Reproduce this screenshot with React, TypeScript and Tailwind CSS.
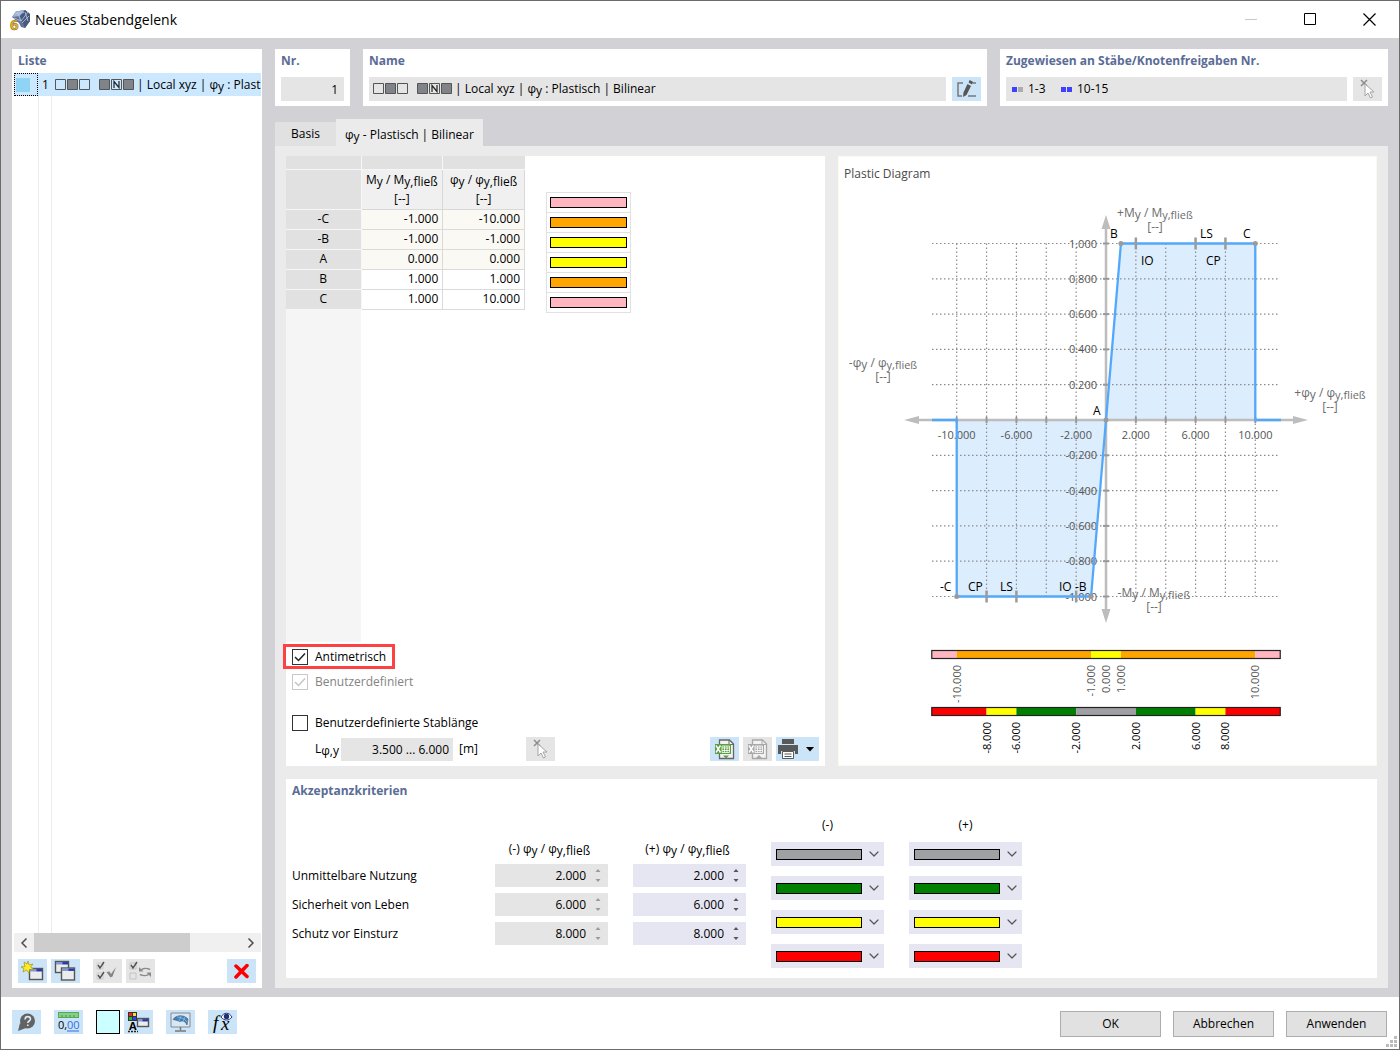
import { useState, type ReactNode } from "react";
import { ChevronDown, ChevronLeft, ChevronRight } from "lucide-react";

type PointRow = { name: string; moment: string; rotation: string; locked: boolean };

const points: PointRow[] = [
  { name: "-C", moment: "-1.000", rotation: "-10.000", locked: true },
  { name: "-B", moment: "-1.000", rotation: "-1.000", locked: true },
  { name: "A", moment: "0.000", rotation: "0.000", locked: true },
  { name: "B", moment: "1.000", rotation: "1.000", locked: false },
  { name: "C", moment: "1.000", rotation: "10.000", locked: false },
];

const zoneColors = ["bg-[#ffb6c1]", "bg-[#ffa500]", "bg-[#ffff00]", "bg-[#ffff00]", "bg-[#ffa500]", "bg-[#ffb6c1]"];

const criteria = [
  { id: "io", label: "Unmittelbare Nutzung", value: "2.000" },
  { id: "ls", label: "Sicherheit von Leben", value: "6.000" },
  { id: "cp", label: "Schutz vor Einsturz", value: "8.000" },
];

const criteriaColors = [
  { value: "#a0a0a4", swatch: "bg-[#a0a0a4]" },
  { value: "#008000", swatch: "bg-[#008000]" },
  { value: "#ffff00", swatch: "bg-[#ffff00]" },
  { value: "#ff0000", swatch: "bg-[#ff0000]" },
];

export default function App() {
  return (
    <div className="flex min-h-screen flex-col border border-[#6b6b6b] bg-white font-['Open_Sans','Noto_Sans',sans-serif] text-xs text-black">
      <TitleBar />
      <main className="flex flex-1 gap-[13px] bg-[#d1d1d6] px-[11px] pt-[11px] pb-[9px]">
        <ListPanel />
        <div className="flex min-w-0 flex-1 flex-col">
          <HeaderFields />
          <Tabs />
          <div className="flex flex-1 flex-col gap-[13px] bg-[#ebebeb] px-[11px] py-[10px]">
            <div className="grid flex-1 grid-cols-2 gap-[13px]">
              <PointsPanel />
              <DiagramPanel />
            </div>
            <CriteriaPanel />
          </div>
        </div>
      </main>
      <Footer />
    </div>
  );
}

function TitleBar() {
  return (
    <header className="flex h-[37px] items-center pl-2">
      <AppIcon />
      <h1 className="ml-1 flex-1 text-sm">Neues Stabendgelenk</h1>
      <button aria-label="Minimieren" className="flex h-full w-[59px] items-center justify-center">
        <svg width="13" height="13" fill="none" stroke="#c8c8c8"><path d="M0 6.5h12" /></svg>
      </button>
      <button aria-label="Maximieren" className="flex h-full w-[59px] items-center justify-center">
        <svg width="13" height="13" fill="none" stroke="#000"><path d="M.5 .5h11v11h-11z" /></svg>
      </button>
      <button aria-label="Schließen" className="flex h-full w-[59px] items-center justify-center">
        <svg width="13" height="13" fill="none" stroke="#000" strokeWidth="1.2"><path d="M.5 .5l12 12M12.5 .5l-12 12" /></svg>
      </button>
    </header>
  );
}

function PanelTitle({ children }: { children: ReactNode }) {
  return <h2 className="text-xs leading-4 font-bold text-[#5a6c96]">{children}</h2>;
}

// Symbol with its lowered index, e.g. My or φy,fließ
function Sym({ base, sub }: { base: string; sub: string }) {
  return (
    <span>
      {base}
      <span className="relative top-0.5">{sub}</span>
    </span>
  );
}

function HingeName() {
  return (
    <span className="flex items-center whitespace-pre">
      <svg width="80" height="12" className="mr-0.5 shrink-0" fill="none" stroke="#555">
        <path d="M.5 .5h10v10h-10zM24.5 .5h10v10h-10z" />
        <path d="M12.5 .5h10v10h-10zM44.5 .5h10v10h-10zM68.5 .5h10v10h-10z" fill="#808488" />
        <path d="M56.5 .5h10v10h-10z" />
        <path d="M59 9V2.500L64 8.500V2" stroke="#222" strokeWidth="1.200" />
      </svg>
      <span>
        | Local xyz | <Sym base="φ" sub="y" /> : Plastisch | Bilinear
      </span>
    </span>
  );
}

function IconButton({ label, disabled, children }: { label: string; disabled?: boolean; children: ReactNode }) {
  return (
    <button
      aria-label={label}
      disabled={disabled}
      className="flex h-6 w-[29px] shrink-0 items-center justify-center bg-[#cce4f7] disabled:bg-[#e5e5e5]"
    >
      {children}
    </button>
  );
}

function ListPanel() {
  return (
    <aside className="flex w-[250px] shrink-0 flex-col bg-white">
      <div className="px-1.5 py-1">
        <PanelTitle>Liste</PanelTitle>
      </div>
      <div className="ml-0.5 flex flex-1 flex-col">
        <button className="mr-px flex h-[23px] items-center overflow-hidden bg-[#cce8ff] text-left">
          <span className="flex h-full w-6 shrink-0 items-center border border-dotted border-black pl-px">
            <span className="h-3.5 w-3.5 bg-[#8fd4f4]" />
          </span>
          <span className="w-[17px] shrink-0 pl-1">1</span>
          <HingeName />
        </button>
        <div className="flex flex-1">
          <div className="w-[25px] border-r border-[#ededed]" />
          <div className="w-[13px] border-r border-[#ededed]" />
        </div>
        <div className="mr-px flex h-[19px] items-center bg-[#f0f0f0]">
          <button aria-label="Nach links" className="flex w-5 justify-center">
            <ChevronLeft size={16} strokeWidth={2.5} color="#505050" />
          </button>
          <div className="h-full w-[156px] bg-[#cdcdcd]" />
          <button aria-label="Nach rechts" className="ml-auto flex w-5 justify-center">
            <ChevronRight size={16} strokeWidth={2.5} color="#505050" />
          </button>
        </div>
      </div>
      <div className="flex gap-1 px-1.5 pt-[7px] pb-[5px]">
        <IconButton label="Neu"><NewIcon /></IconButton>
        <IconButton label="Kopieren"><CopyIcon /></IconButton>
        <span className="w-[5px]" />
        <IconButton label="Alle auswählen" disabled><CheckAllIcon /></IconButton>
        <IconButton label="Auswahl umkehren" disabled><InvertIcon /></IconButton>
        <span className="flex-1" />
        <IconButton label="Löschen">
          <svg width="17" height="16" stroke="#f00" strokeWidth="3.500" strokeLinecap="round"><path d="M3 3l11 10.500M14 2.500L3 14" /></svg>
        </IconButton>
      </div>
    </aside>
  );
}

function HeaderFields() {
  return (
    <div className="flex gap-[13px]">
      <section className="flex w-[75px] shrink-0 flex-col gap-2 bg-white px-1.5 pt-1 pb-[5px]">
        <PanelTitle><label htmlFor="nr">Nr.</label></PanelTitle>
        <input id="nr" readOnly value="1" className="h-6 w-full min-w-0 bg-[#e5e5e5] px-1.5 text-right" />
      </section>
      <section className="flex min-w-0 flex-1 flex-col gap-2 bg-white px-1.5 pt-1 pb-[5px]">
        <PanelTitle>Name</PanelTitle>
        <div className="flex gap-1.5">
          <div className="flex h-6 min-w-0 flex-1 items-center overflow-hidden bg-[#e5e5e5] px-1">
            <HingeName />
          </div>
          <IconButton label="Name bearbeiten"><EditIcon /></IconButton>
        </div>
      </section>
      <section className="flex w-[388px] shrink-0 flex-col gap-2 bg-white px-1.5 pt-1 pb-[5px]">
        <PanelTitle>Zugewiesen an Stäbe/Knotenfreigaben Nr.</PanelTitle>
        <div className="flex gap-1.5">
          <div className="flex h-6 flex-1 items-center bg-[#e5e5e5] px-1.5">
            <span className="h-[5px] w-[5px] bg-[#4040ff]" />
            <span className="ml-px h-[5px] w-[5px] bg-[#acacac]" />
            <span className="ml-[5px] w-[33px]">1-3</span>
            <span className="h-[5px] w-[5px] bg-[#4040ff]" />
            <span className="ml-px h-[5px] w-[5px] bg-[#4040ff]" />
            <span className="ml-[5px]">10-15</span>
          </div>
          <IconButton label="Grafisch auswählen" disabled><PickIcon /></IconButton>
        </div>
      </section>
    </div>
  );
}

function Tabs() {
  return (
    <nav className="mt-[13px] flex items-end">
      <button className="h-6 w-[61px] bg-[#e1e1e1]">Basis</button>
      <button className="h-[27px] bg-[#ebebeb] px-[9px] pt-1">
        <Sym base="φ" sub="y" /> - Plastisch | Bilinear
      </button>
    </nav>
  );
}

function PointsPanel() {
  const [antimetric, setAntimetric] = useState(true);
  const [customLength, setCustomLength] = useState(false);

  return (
    <section className="flex flex-col bg-white pb-[5px]">
      <div className="flex flex-1 items-stretch">
        <div className="flex flex-col">
          <table className="w-[239px] table-fixed border-collapse">
            <thead>
              <tr className="h-[13px]">
                <td className="w-[75px] border-r border-b border-[#f7f7f7] bg-[#e1e1e1]" />
                <td className="border-r border-b border-[#f7f7f7] bg-[#e1e1e1]" />
                <td className="border-b border-[#f7f7f7] bg-[#e1e1e1]" />
              </tr>
              <tr className="h-10 leading-[19px]">
                <td className="border-r border-b border-[#f7f7f7] bg-[#e1e1e1]" />
                <th className="border-r border-b border-[#d8d8d8] bg-[#f0f0f0] font-normal whitespace-nowrap">
                  <Sym base="M" sub="y" /> / <Sym base="M" sub="y,fließ" />
                  <br />
                  [--]
                </th>
                <th className="border-r border-b border-[#d8d8d8] bg-[#f0f0f0] font-normal whitespace-nowrap">
                  <Sym base="φ" sub="y" /> / <Sym base="φ" sub="y,fließ" />
                  <br />
                  [--]
                </th>
              </tr>
            </thead>
            <tbody>
              {points.map((row) => (
                <tr key={row.name} className={row.locked ? "h-5 bg-[#faf9f4] leading-4" : "h-5 bg-white leading-4"}>
                  <th className="border-r border-b border-[#f7f7f7] bg-[#e1e1e1] font-normal">{row.name}</th>
                  <td className="border-r border-b border-[#dadada] pr-1 text-right">{row.moment}</td>
                  <td className="border-r border-b border-[#dadada] pr-1 text-right">{row.rotation}</td>
                </tr>
              ))}
            </tbody>
          </table>
          <div className="w-[75px] flex-1 bg-[#f5f5f5]" />
        </div>
        <ul className="mt-9 ml-[21px] h-[121px] w-[85px] border-x border-t border-[#e1e1e1]">
          {zoneColors.map((color, i) => (
            <li key={i} className="flex h-5 items-center border-b border-[#e1e1e1] px-[3px]">
              <span className={`h-[11px] w-full border border-black ${color}`} />
            </li>
          ))}
        </ul>
      </div>

      <label className="mt-[5px] flex h-[19px] w-[106px] items-center gap-[7px] pl-1.5 outline-3 outline-[#fc4242]">
        <CheckBox checked={antimetric} onChange={setAntimetric} />
        Antimetrisch
      </label>
      <label className="mt-1.5 flex h-[19px] items-center gap-[7px] pl-1.5 text-[#838383]">
        <CheckBox checked disabled />
        Benutzerdefiniert
      </label>
      <label className="mt-[22px] flex h-[19px] items-center gap-[7px] pl-1.5">
        <CheckBox checked={customLength} onChange={setCustomLength} />
        Benutzerdefinierte Stablänge
      </label>
      <div className="mt-[5px] flex items-center gap-1 pr-1.5 pl-[29px]">
        <label htmlFor="length" className="w-[22px] whitespace-nowrap">
          <Sym base="L" sub="φ,y" />
        </label>
        <input id="length" readOnly value="3.500 ... 6.000" className="h-[23px] w-[112px] bg-[#e5e5e5] px-1 text-right" />
        <span className="ml-0.5 w-[63px]">[m]</span>
        <IconButton label="Stab wählen" disabled><PickIcon /></IconButton>
        <span className="flex-1" />
        <IconButton label="Nach Excel exportieren"><ExcelIcon main="#5a9e42" line="#666" down /></IconButton>
        <IconButton label="Aus Excel importieren" disabled><ExcelIcon main="#a8a8a8" line="#a8a8a8" /></IconButton>
        <button aria-label="Drucken" className="flex h-6 w-[43px] items-center bg-[#cce4f7] pl-0.5">
          <PrinterIcon />
        </button>
      </div>
    </section>
  );
}

function CheckBox({
  checked,
  disabled,
  onChange,
}: {
  checked: boolean;
  disabled?: boolean;
  onChange?: (v: boolean) => void;
}) {
  return (
    <span className="relative h-4 w-4 shrink-0">
      <input
        type="checkbox"
        checked={checked}
        disabled={disabled}
        onChange={(e) => onChange?.(e.target.checked)}
        className="block h-4 w-4 appearance-none border border-[#333] bg-white disabled:border-[#c8c8c8]"
      />
      {checked && (
        <svg className="pointer-events-none absolute inset-0" width="16" height="16" fill="none" stroke={disabled ? "#c4c4c4" : "#222"} strokeWidth="1.500">
          <path d="M3 8l3.500 3.500L13 4.500" />
        </svg>
      )}
    </span>
  );
}

/* ---------- diagram ---------- */

const OX = 267;
const OY = 230;
const px = (v: number) => OX + v * 14.93;
const py = (v: number) => OY - v * 176.5;

const gridX = [-10, -8, -6, -4, -2, 2, 4, 6, 8, 10];
const gridY = [1, 0.8, 0.6, 0.4, 0.2, -0.2, -0.4, -0.6, -0.8, -1];

const pointLabels = [
  { t: "B", x: 271, y: 48 },
  { t: "IO", x: 302, y: 75 },
  { t: "LS", x: 361, y: 48 },
  { t: "CP", x: 367, y: 75 },
  { t: "C", x: 404, y: 48 },
  { t: "A", x: 254, y: 225 },
  { t: "-C", x: 101, y: 401 },
  { t: "CP", x: 129, y: 401 },
  { t: "LS", x: 161, y: 401 },
  { t: "IO", x: 220, y: 401 },
  { t: "-B", x: 236, y: 401 },
];

const zoneBar = [
  { from: -11.67, to: -10, fill: "#ffb6c1" },
  { from: -10, to: -1, fill: "#ffa500" },
  { from: -1, to: 1, fill: "#ffff00" },
  { from: 1, to: 10, fill: "#ffa500" },
  { from: 10, to: 11.67, fill: "#ffb6c1" },
];

const criteriaBar = [
  { from: -11.67, to: -8, fill: "#ff0000" },
  { from: -8, to: -6, fill: "#ffff00" },
  { from: -6, to: -2, fill: "#008000" },
  { from: -2, to: 2, fill: "#a0a0a4" },
  { from: 2, to: 6, fill: "#008000" },
  { from: 6, to: 8, fill: "#ffff00" },
  { from: 8, to: 11.67, fill: "#ff0000" },
];

function AxisLabel({ x, y, sign, base }: { x: number; y: number; sign: string; base: string }) {
  return (
    <g fill="#6c6c6c" fontSize="12" textAnchor="middle">
      <text x={x} y={y}>
        {sign}
        {base}
        <tspan dy="2">y</tspan>
        <tspan dy="-2"> / {base}</tspan>
        <tspan dy="2" fontSize="11">y,fließ</tspan>
      </text>
      <text x={x} y={y + 14}>[--]</text>
    </g>
  );
}

function ColorBar({ y, parts, ticks, color }: { y: number; parts: typeof zoneBar; ticks: number[]; color: string }) {
  return (
    <g>
      {parts.map((p) => (
        <rect key={p.from} x={px(p.from)} y={y} width={px(p.to) - px(p.from)} height="8" fill={p.fill} />
      ))}
      <rect x={px(-11.67)} y={y - 0.5} width={px(11.67) - px(-11.67)} height="8" fill="none" stroke="#222" strokeWidth="1.200" />
      {ticks.map((v) => (
        <text key={v} transform={`translate(${px(v) + 4} ${y + 14}) rotate(-90)`} textAnchor="end" fill={color}>
          {v.toFixed(3)}
        </text>
      ))}
    </g>
  );
}

function DiagramPanel() {
  return (
    <section className="flex flex-col border border-[#fafaee] bg-white">
      <h3 className="h-[33px] px-[5px] pt-2 text-xs leading-[18px] text-[#4a4a4a]">Plastic Diagram</h3>
      <svg viewBox="0 0 537 575" className="w-full text-[11px]">
        <path
          d={`M${OX} ${OY}L${px(1)} ${py(1)}H${px(10)}V${OY}zM${OX} ${OY}L${px(-1)} ${py(-1)}H${px(-10)}V${OY}z`}
          fill="#dcedfd"
        />
        <g stroke="#8c8c8c" strokeWidth="1.200" strokeDasharray="1.500 2.500">
          {gridX.map((v) => (
            <path key={v} d={`M${px(v)} ${py(1)}V${py(-1)}`} />
          ))}
          {gridY.map((v) => (
            <path key={v} d={`M93 ${py(v)}H441`} />
          ))}
        </g>

        <g stroke="#bdbdbd" strokeWidth="2.500">
          <path d={`M78 ${OY}H456M${OX} 38V420`} />
        </g>
        <g fill="#bdbdbd">
          <path d={`M65 ${OY}l15 -4v8zM469 ${OY}l-15 -4v8zM${OX} 25l-4.500 14h9zM${OX} 433l-4.500 -14h9z`} />
        </g>
        <g fill="#999">
          {gridX.map((v) => (
            <rect key={v} x={px(v) - 1} y={OY - 3} width="2" height="6" />
          ))}
          {gridY.map((v) => (
            <rect key={v} x={OX - 3} y={py(v) - 1} width="6" height="2" />
          ))}
        </g>

        <g fill="#555" textAnchor="middle">
          {[-10, -6, -2, 2, 6, 10].map((v) => (
            <text key={v} x={px(v)} y={OY + 19}>{v.toFixed(3)}</text>
          ))}
        </g>
        <g fill="#555" textAnchor="end">
          {gridY.map((v) => (
            <text key={v} x="258" y={py(v) + 4}>{v.toFixed(3)}</text>
          ))}
        </g>

        <path
          d={`M93 ${OY}H${px(-10)}V${py(-1)}H${px(-1)}L${px(1)} ${py(1)}H${px(10)}V${OY}H442`}
          fill="none"
          stroke="#54a8fa"
          strokeWidth="2.300"
          strokeLinejoin="round"
        />
        <g stroke="#9b9b9b" strokeWidth="2.500">
          {[2, 6, 8].map((v) => (
            <path key={v} d={`M${px(v)} ${py(1) - 6}v12M${px(-v)} ${py(-1) - 6}v12`} />
          ))}
        </g>
        <g fill="#9b9b9b">
          <circle cx={px(1)} cy={py(1)} r="2.500" />
          <circle cx={px(10)} cy={py(1)} r="2.500" />
          <circle cx={OX} cy={OY} r="2.500" />
          <circle cx={px(-1)} cy={py(-1)} r="2.500" />
          <circle cx={px(-10)} cy={py(-1)} r="2.500" />
        </g>

        <g fontSize="12">
          {pointLabels.map((p) => (
            <text key={`${p.t}${p.x}`} x={p.x} y={p.y}>{p.t}</text>
          ))}
        </g>

        <AxisLabel x={316} y={27} sign="+" base="M" />
        <AxisLabel x={315} y={407} sign="-" base="M" />
        <AxisLabel x={44} y={177} sign="-" base="φ" />
        <AxisLabel x={491} y={207} sign="+" base="φ" />

        <ColorBar y={461} parts={zoneBar} ticks={[-10, -1, 0, 1, 10]} color="#555" />
        <ColorBar y={518} parts={criteriaBar} ticks={[-8, -6, -2, 2, 6, 8]} color="#000" />
      </svg>
    </section>
  );
}

/* ---------- acceptance criteria ---------- */

function CriteriaPanel() {
  return (
    <section className="bg-white px-1.5 pt-1 pb-[10px]">
      <PanelTitle>Akzeptanzkriterien</PanelTitle>
      <div className="mt-[17px] flex gap-[25px]">
        <div className="flex w-[178px] flex-col gap-1.5 pt-12">
          {criteria.map((c) => (
            <span key={c.id} className="flex h-[23px] items-center">{c.label}</span>
          ))}
        </div>
        <ValueColumn sign="(-)" disabled />
        <ValueColumn sign="(+)" />
        <ColorColumn sign="(-)" />
        <ColorColumn sign="(+)" />
      </div>
    </section>
  );
}

function ValueColumn({ sign, disabled }: { sign: string; disabled?: boolean }) {
  return (
    <div className="flex w-[113px] flex-col gap-1.5 pt-6">
      <div className="h-[18px] pr-1 text-center leading-[18px] whitespace-nowrap">
        {sign} <Sym base="φ" sub="y" /> / <Sym base="φ" sub="y,fließ" />
      </div>
      {criteria.map((c) => (
        <div key={c.id} className={disabled ? "flex h-[23px] bg-[#e5e5e5] text-[#9a9a9a]" : "flex h-[23px] bg-[#e6e6f2] text-[#555]"}>
          <input
            aria-label={`${c.label} ${sign}`}
            defaultValue={c.value}
            disabled={disabled}
            className="w-[91px] bg-transparent text-right text-black"
          />
          <span className="ml-[9px] flex flex-col justify-between py-[5px]">
            <button aria-label="Erhöhen" disabled={disabled}>
              <svg width="6" height="3" className="block" fill="currentColor"><path d="M3 0l2.500 3h-5z" /></svg>
            </button>
            <button aria-label="Verringern" disabled={disabled}>
              <svg width="6" height="3" className="block" fill="currentColor"><path d="M3 3L.5 0h5z" /></svg>
            </button>
          </span>
        </div>
      ))}
    </div>
  );
}

function ColorColumn({ sign }: { sign: string }) {
  return (
    <div className="flex w-[113px] flex-col gap-2.5">
      <div className="-mb-0.5 h-[18px] text-center leading-[18px]">{sign}</div>
      {criteriaColors.map((c) => (
        <div key={c.value} className="relative h-6">
          <select aria-label={`Farbe ${sign}`} className="h-6 w-full appearance-none bg-[#e6e6f2]" defaultValue={c.value}>
            <option value={c.value} />
          </select>
          <span className="pointer-events-none absolute inset-0 flex items-center justify-between pr-0.5 pl-[5px]">
            <span className={`h-[11px] w-[86px] border border-black ${c.swatch}`} />
            <ChevronDown size={16} strokeWidth={1.8} color="#555" />
          </span>
        </div>
      ))}
    </div>
  );
}

function Footer() {
  return (
    <footer className="relative flex h-[52px] items-center pr-3 pb-0.5 pl-[11px]">
      <div className="flex gap-[13px]">
        <IconButton label="Hilfe"><HelpIcon /></IconButton>
        <IconButton label="Einheiten"><UnitsIcon /></IconButton>
        <div className="flex gap-1">
          <button aria-label="Farbe" className="h-6 w-6 border border-black bg-[#ccffff]" />
          <IconButton label="Anzeigeeigenschaften"><DisplayIcon /></IconButton>
        </div>
        <IconButton label="Ansicht"><MonitorIcon /></IconButton>
        <IconButton label="Formel"><FormulaIcon /></IconButton>
      </div>
      <div className="mt-1 ml-auto flex gap-3">
        {["OK", "Abbrechen", "Anwenden"].map((label) => (
          <button key={label} className="h-[26px] w-[101px] border border-[#adadad] bg-[#e1e1e1]">
            {label}
          </button>
        ))}
      </div>
      <svg className="absolute right-0.5 bottom-0.5" width="11" height="11" fill="#bcbcbc">
        <path d="M8 0h3v3h-3zM4 4h3v3h-3zM8 4h3v3h-3zM0 8h3v3h-3zM4 8h3v3h-3zM8 8h3v3h-3z" />
      </svg>
    </footer>
  );
}

/* ---------- icons ---------- */

function AppIcon() {
  return (
    <svg width="22" height="22" viewBox="0 0 22 22">
      <path d="M3 8L7 2.500 16 1l5 4 0 7-5 7-4-1-2-4z" fill="#5f739a" />
      <path d="M3 8l4-5.500L16 1l-5 6z" fill="#9fb3d8" />
      <path d="M11 7l5-6 5 4v7l-5 7z" fill="#47597d" />
      <path d="M6 5l9-1.500M5 9l7 3 7-9M8 2.500L12 12M13 14l7-7M16 3l3 9" stroke="#b9c8e4" strokeWidth=".8" fill="none" />
      <text x="1" y="20.500" fontSize="15" fontWeight="700" fill="#e8b92c" stroke="#7a6015" strokeWidth=".5">6</text>
    </svg>
  );
}

function MiniWindow({ x, y, w = 13, h = 10 }: { x: number; y: number; w?: number; h?: number }) {
  return (
    <g>
      <rect x={x} y={y} width={w} height={h} fill="#ececec" stroke="#555" strokeWidth="1.400" />
      <rect x={x + 0.5} y={y + 0.5} width={w - 1} height="2.500" fill="#7f97d4" />
      <path d={`M${x + w - 6} ${y + 1.7}h5.500`} stroke="#2638a8" strokeWidth="2.200" />
    </g>
  );
}

function NewIcon() {
  return (
    <svg width="25" height="22">
      <MiniWindow x={9.5} y={8.500} w={13} h={11} />
      <path d="M8 1l1 4 4-1-2.500 3 3 2-4 .5-.5 3.500-2.500-3L3 12l1-3.500L1 7l4-.5L4 2l3 2z" fill="#ffee22" stroke="#a09018" strokeWidth=".7" />
    </svg>
  );
}

function CopyIcon() {
  return (
    <svg width="25" height="22">
      <MiniWindow x={2.5} y={1.500} w={13} h={11} />
      <MiniWindow x={8.500} y={8} w={13} h={12} />
    </svg>
  );
}

function CheckAllIcon() {
  return (
    <svg width="23" height="22" fill="none">
      <path d="M1 3h6v6H1zM1 13h6v6H1z" stroke="#ccc" />
      <path d="M2 5l2 3 4-6M2 15l2 3 4-6" stroke="#505050" strokeWidth="1.400" />
      <path d="M10.500 12l3-.5 1.500 2.500 5-7-3.500 9.500-2 1z" fill="#858585" />
    </svg>
  );
}

function InvertIcon() {
  return (
    <svg width="23" height="22" fill="none">
      <path d="M1 3h6v6H1zM1 13h6v6H1z" stroke="#c4c4c4" />
      <path d="M2 5l2 3 4-6" stroke="#505050" strokeWidth="1.400" />
      <path d="M12 10c2-2 6-2 9-.5M20 14c-2 2-6 2-9 .5" stroke="#8a8a8a" strokeWidth="1.600" />
      <path d="M10 7v4.500h4.500zM22 17v-4.500h-4.500z" fill="#8a8a8a" />
    </svg>
  );
}

function EditIcon() {
  return (
    <svg width="21" height="20" fill="none">
      <path d="M7 4H2v13h4M12 17h8M17 4h3" stroke="#777" strokeWidth="1.500" />
      <path d="M11.500 5l3.500 2-4.500 9-3.500 2 .5-4.500z" fill="#555" />
      <path d="M12.500 3.500l1.200-2.500 3.500 2-1.200 2.500z" fill="#555" />
    </svg>
  );
}

function PickIcon() {
  return (
    <svg width="19" height="20" fill="none">
      <path d="M3 1l6 6M9 1L3 7" stroke="#8c8c8c" strokeWidth="1.500" />
      <path d="M7 5v12l3-3 2.500 5 2-1-2.500-5h4z" fill="#fff" stroke="#a4a4a4" />
    </svg>
  );
}

function ExcelIcon({ main, line, down }: { main: string; line: string; down?: boolean }) {
  return (
    <svg width="21" height="21" fill="none">
      <path d="M5.500 1h10l4 4v14.500h-14z" fill="#f2f2f2" stroke={line} strokeWidth="1.300" />
      <path d="M15 1v4.500h4.500" stroke={line} />
      <path d="M1 5h16v10H1z" fill={main} />
      <path d="M8 7h7.500v6.500H8zM8 9h7.500M8 11.500h7.500M10.500 7v6.500M13 7v6.500" stroke="#fff" strokeWidth=".8" />
      <path d="M2 6.500l4.500 7M6.500 6.500L2 13.500" stroke="#fff" strokeWidth="1.400" />
      <path d={down ? "M9 16.500h6l-3 3z" : "M9 19h6l-3-3z"} fill={main} />
    </svg>
  );
}

function PrinterIcon() {
  return (
    <svg width="38" height="20">
      <path d="M4 0h12v5H4zM0 6h20v9h-3v-3H3v3H0z" fill="#58595b" />
      <path d="M4.500 12.500h11v7h-11z" fill="#fff" stroke="#58595b" />
      <path d="M6.500 15h7M6.500 17.500h7" stroke="#58595b" />
      <path d="M28 8h8l-4 4.500z" fill="#000" />
    </svg>
  );
}

function HelpIcon() {
  return (
    <svg width="19" height="19">
      <circle cx="10.500" cy="8" r="7.500" fill="#636363" />
      <path d="M1 18l2-8 6 5z" fill="#636363" />
      <path d="M8 6.500c0-4 5.500-3.500 5.500-.5 0 2-2.700 2-2.700 4M10.800 11.500v1.500" stroke="#dbeaf6" strokeWidth="1.600" fill="none" />
    </svg>
  );
}

function UnitsIcon() {
  return (
    <svg width="23" height="22">
      <rect x="1.500" y="1.500" width="20" height="5" fill="#85d085" stroke="#56a956" />
      <path d="M5 4v2M9 4v2M13 4v2M17 4v2" stroke="#3a813a" strokeWidth=".8" />
      <text x="1" y="18" fontSize="11">0,</text>
      <text x="10" y="18" fontSize="11" fill="#2e6fe0">00</text>
      <path d="M10 20h12" stroke="#2e6fe0" />
    </svg>
  );
}

function DisplayIcon() {
  return (
    <svg width="23" height="22">
      <path d="M1 1h9v9H1z" fill="#333" />
      <path d="M2 2h3v3H2z" fill="#f22" />
      <path d="M6 2h3v3H6z" fill="#fd2" />
      <path d="M2 6h3v3H2z" fill="#2b2" />
      <path d="M6 6h3v3H6z" fill="#24f" />
      <text x="2" y="18.500" fontSize="11" fontWeight="700">A</text>
      <path d="M1 20.500h10" stroke="#222" strokeWidth="1.500" strokeDasharray="2 1" />
      <MiniWindow x={10.5} y={7.500} w={11} h={8} />
    </svg>
  );
}

function MonitorIcon() {
  return (
    <svg width="23" height="22">
      <path d="M2 2h19v14H2z" fill="#d7e7f4" stroke="#888" />
      <path d="M11.500 16v3M6 20h11" stroke="#777" strokeWidth="1.500" />
      <path d="M4 8.500C7 4 14 3 19 8l-1 6c-2-4-4-4.500-7-3.500L8 9.500z" fill="#4580b4" stroke="#3b6288" strokeWidth=".6" />
      <path d="M8 6c4 0 8 2 10 5M12 5l-2 5M16 6l-2 4.500" stroke="#a9d0ee" fill="none" strokeWidth=".6" />
    </svg>
  );
}

function FormulaIcon() {
  return (
    <svg width="25" height="23">
      <text x="3" y="18" fontFamily="Liberation Serif, serif" fontStyle="italic" fontSize="19">f</text>
      <text x="11" y="19" fontFamily="Liberation Serif, serif" fontStyle="italic" fontSize="19">x</text>
      <path d="M11 6c3-5 8-5 11 0-3 4-8 4-11 0z" fill="#fff" stroke="#223a80" />
      <circle cx="16.500" cy="5.500" r="2.700" fill="#22306e" />
    </svg>
  );
}
